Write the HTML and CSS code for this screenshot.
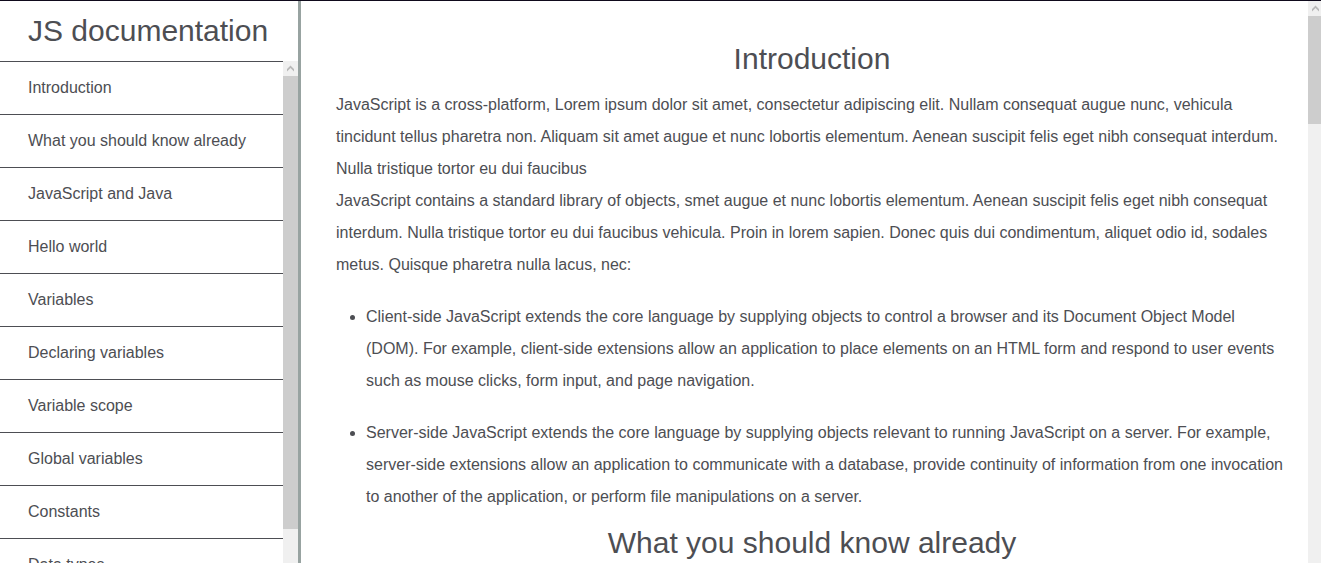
FILE: index.html
```html
<!DOCTYPE html>
<html lang="en">
<head>
<meta charset="utf-8">
<title>JS documentation</title>
<link rel="stylesheet" href="styles.css">
</head>
<body>
<div class="page">
  <nav class="sidebar">
    <h1 class="sidebar-title">JS documentation</h1>
    <div class="sidebar-body">
      <ul class="nav-list">
        <li><a class="nav-link" href="#introduction">Introduction</a></li>
        <li><a class="nav-link" href="#already">What you should know already</a></li>
        <li><a class="nav-link" href="#java">JavaScript and Java</a></li>
        <li><a class="nav-link" href="#hello">Hello world</a></li>
        <li><a class="nav-link" href="#variables">Variables</a></li>
        <li><a class="nav-link" href="#declaring">Declaring variables</a></li>
        <li><a class="nav-link" href="#scope">Variable scope</a></li>
        <li><a class="nav-link" href="#global">Global variables</a></li>
        <li><a class="nav-link" href="#constants">Constants</a></li>
        <li><a class="nav-link" href="#types">Data types</a></li>
      </ul>
      <div class="scrollbar" aria-hidden="true">
        <svg class="scroll-arrow" viewBox="0 0 15 15"><path d="M4 8 7.5 4.5 11 8V10.5L7.5 7 4 10.5Z" /></svg>
        <div class="scroll-thumb nav-thumb"></div>
      </div>
    </div>
  </nav>
  <main class="content">
    <section id="introduction">
      <h2 class="section-title">Introduction</h2>
      <p>JavaScript is a cross-platform, Lorem ipsum dolor sit amet, consectetur adipiscing elit. Nullam consequat augue nunc, vehicula tincidunt tellus pharetra non. Aliquam sit amet augue et nunc lobortis elementum. Aenean suscipit felis eget nibh consequat interdum. Nulla tristique tortor eu dui faucibus</p>
      <p>JavaScript contains a standard library of objects, smet augue et nunc lobortis elementum. Aenean suscipit felis eget nibh consequat interdum. Nulla tristique tortor eu dui faucibus vehicula. Proin in lorem sapien. Donec quis dui condimentum, aliquet odio id, sodales metus. Quisque pharetra nulla lacus, nec:</p>
      <ul class="bullets">
        <li>Client-side JavaScript extends the core language by supplying objects to control a browser and its Document Object Model (DOM). For example, client-side extensions allow an application to place elements on an HTML form and respond to user events such as mouse clicks, form input, and page navigation.</li>
        <li>Server-side JavaScript extends the core language by supplying objects relevant to running JavaScript on a server. For example, server-side extensions allow an application to communicate with a database, provide continuity of information from one invocation to another of the application, or perform file manipulations on a server.</li>
      </ul>
    </section>
    <section id="already">
      <h2 class="section-title">What you should know already</h2>
    </section>
  </main>
  <div class="scrollbar page-scrollbar" aria-hidden="true">
    <svg class="scroll-arrow" viewBox="0 0 15 15"><path d="M4 8 7.5 4.5 11 8V10.5L7.5 7 4 10.5Z" /></svg>
    <div class="scroll-thumb page-thumb"></div>
  </div>
</div>
</body>
</html>
```
FILE: styles.css
```css
* {
  box-sizing: border-box;
}

body {
  margin: 0;
  overflow: hidden;
  background: #fff;
  color: #4d4e53;
  font: 16px/32px "Liberation Sans", Arial, sans-serif;
}

h1,
h2,
p,
ul {
  margin: 0;
  padding: 0;
}

.page {
  display: flex;
  height: 100vh;
  overflow: hidden;
  border-top: 1px solid #0f0a1c;
}

.sidebar {
  display: flex;
  flex: none;
  flex-direction: column;
  width: 301px;
  border-right: 3px solid #98a3a1;
}

.sidebar-title {
  flex: none;
  padding-left: 28px;
  font-size: 30px;
  font-weight: 400;
  line-height: 60px;
  white-space: nowrap;
}

.sidebar-body {
  display: flex;
  flex: 1;
  min-height: 0;
}

.nav-list {
  flex: 1;
  overflow: hidden;
  list-style: none;
}

.nav-link {
  display: block;
  padding: 10px 0 10px 28px;
  border-top: 1px solid #4d4e53;
  color: inherit;
  text-decoration: none;
}

.content {
  flex: 1;
  padding: 28px 20px 0 35px;
  overflow: hidden;
}

.section-title {
  font-size: 30px;
  font-weight: 400;
  line-height: 60px;
  text-align: center;
}

.bullets {
  padding-left: 30px;
}

.bullets li {
  margin-top: 20px;
}

.scrollbar {
  flex: none;
  width: 15px;
  overflow: hidden;
  background: #f0f0f0;
}

.page-scrollbar {
  width: 13px;
}

.scroll-arrow {
  display: block;
  width: 15px;
  height: 15px;
  fill: #b8b8b8;
}

.scroll-thumb {
  background: #cdcdcd;
}

.nav-thumb {
  height: 453px;
}

.page-thumb {
  height: 108px;
}
```
